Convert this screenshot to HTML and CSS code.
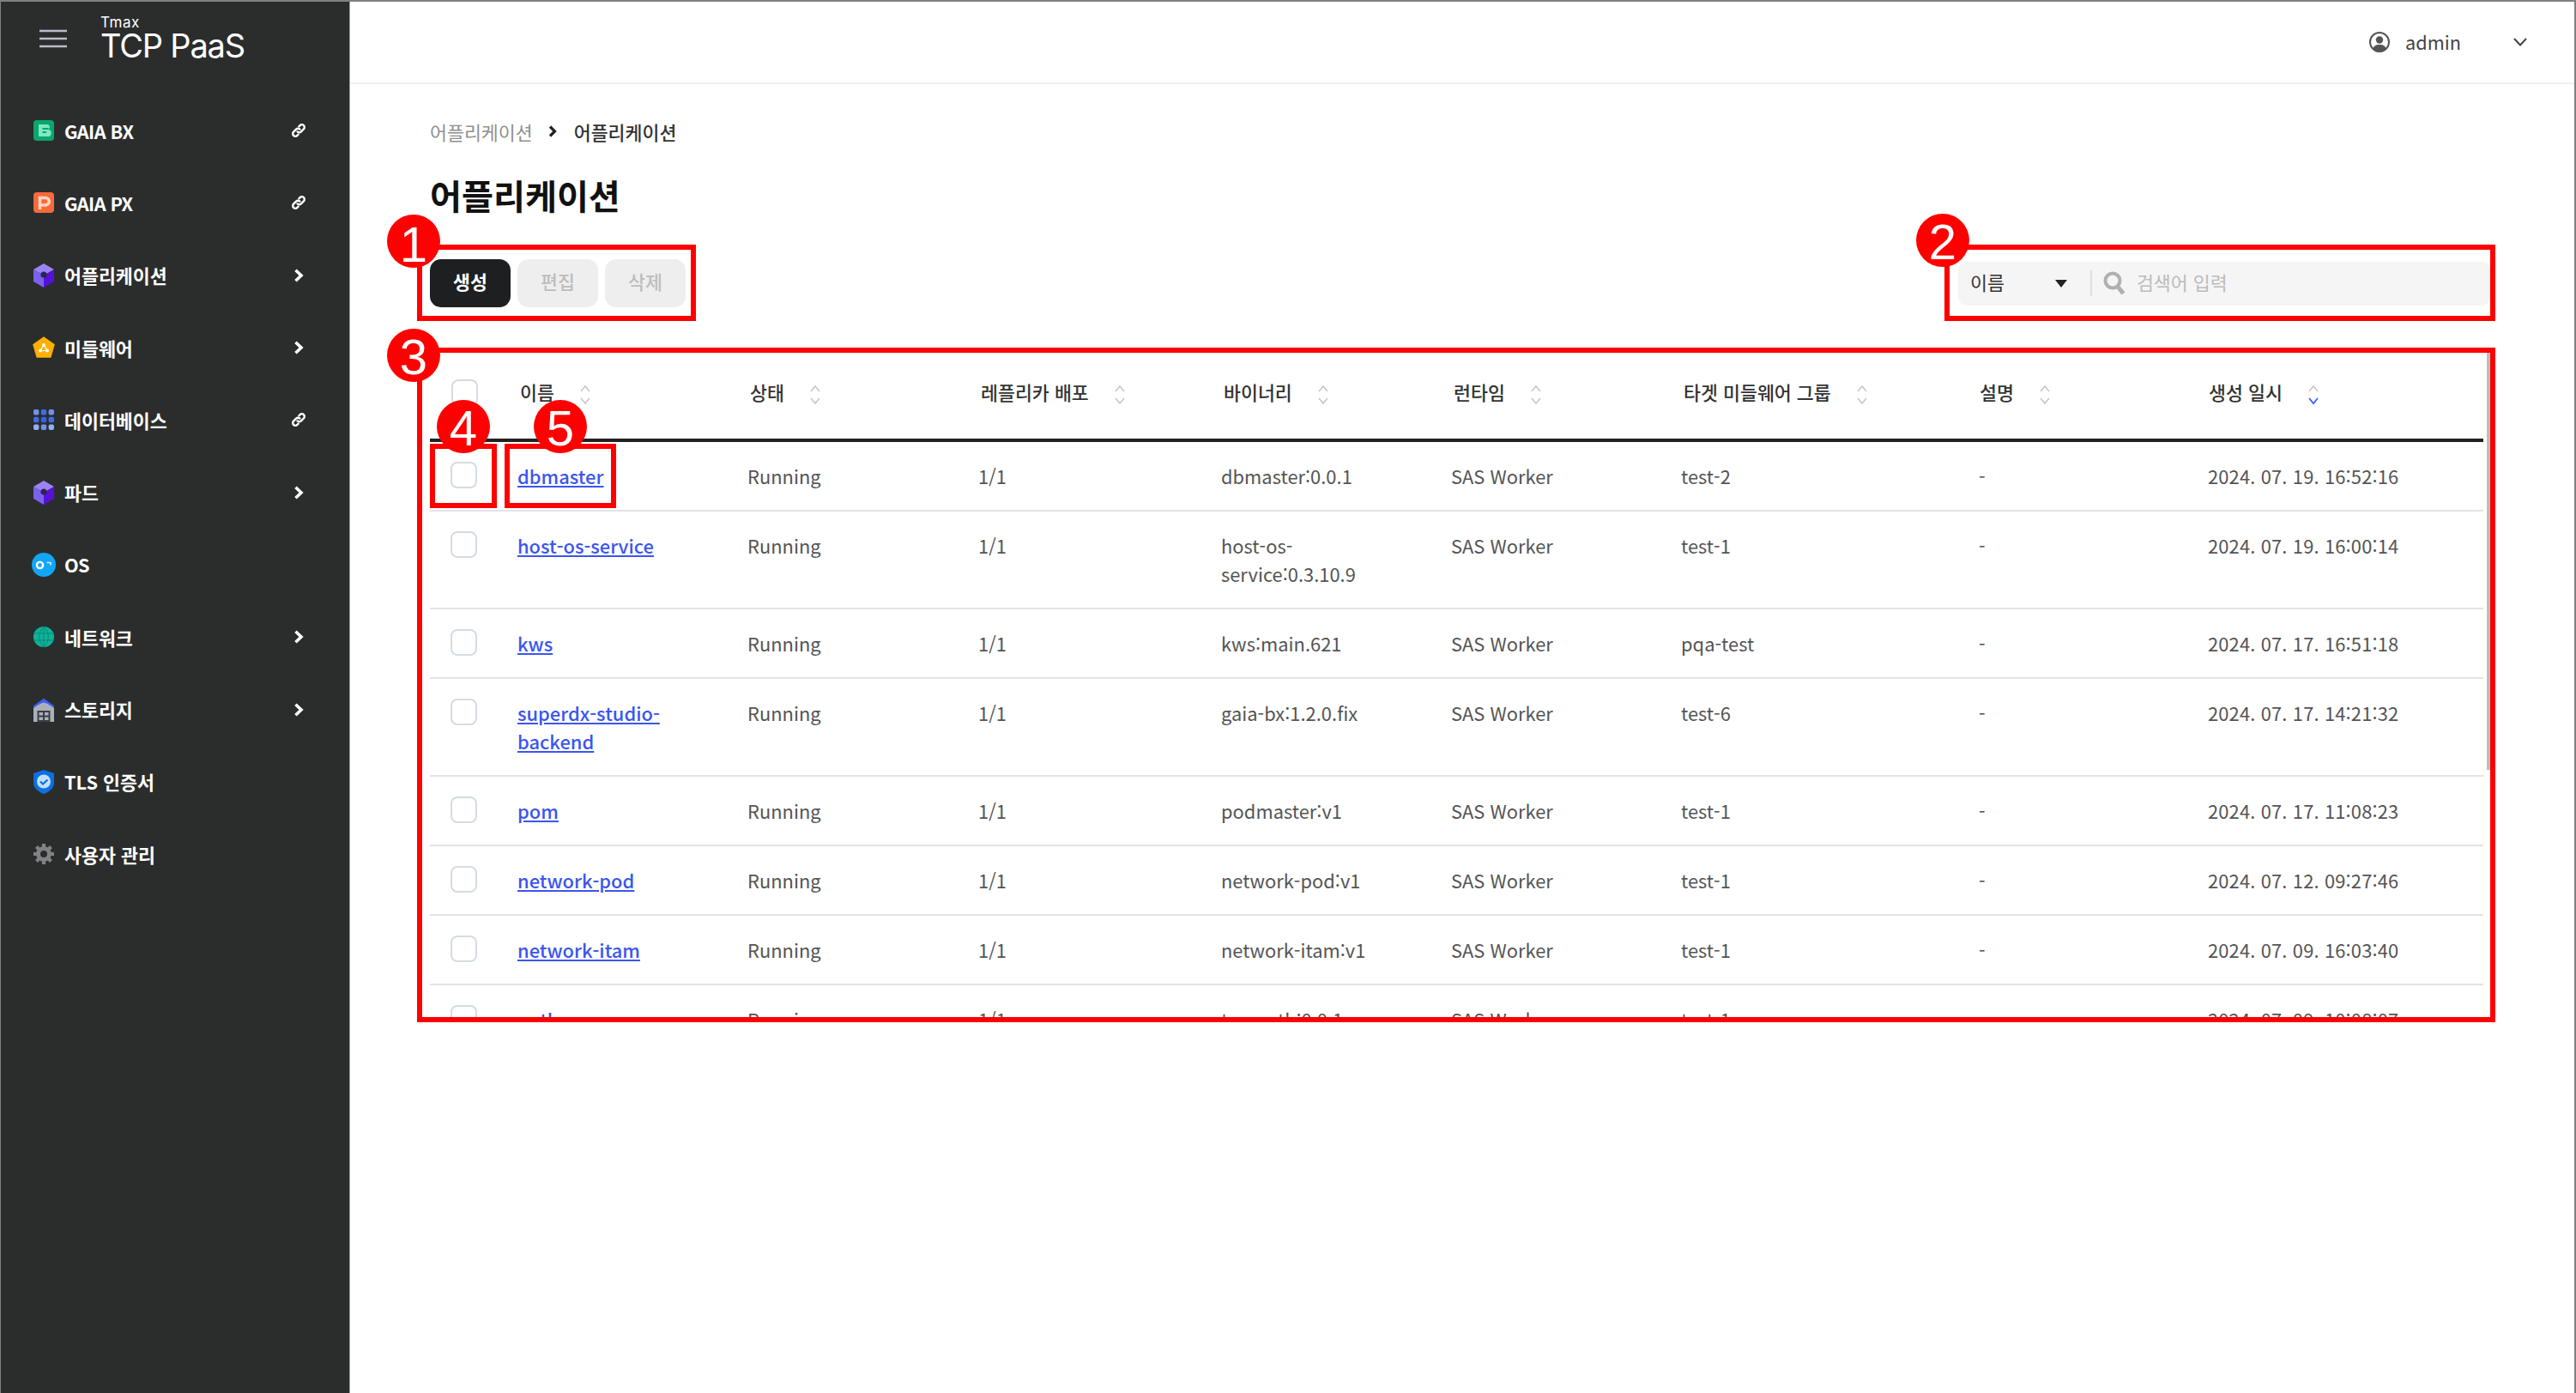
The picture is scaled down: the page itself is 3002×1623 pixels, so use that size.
FILE: index.html
```html
<!DOCTYPE html>
<html lang="ko">
<head>
  <meta charset="UTF-8" />
  <title>TCP PaaS - 어플리케이션</title>
  <link rel="stylesheet" href="styles.css">
</head>
<body>

<svg class="defs" width="0" height="0">
  <symbol id="link" viewBox="0 0 18 18">
    <path d="M7.6 10.4a3 3 0 0 0 4.3 0l3-3a3 3 0 0 0-4.3-4.3L9.4 4.3" fill="none" stroke="#fff" stroke-width="2.4" stroke-linecap="round"/>
    <path d="M10.4 7.6a3 3 0 0 0-4.3 0l-3 3a3 3 0 0 0 4.3 4.3l1.2-1.2" fill="none" stroke="#fff" stroke-width="2.4" stroke-linecap="round"/>
  </symbol>
  <symbol id="chevron" viewBox="0 0 12 16">
    <path d="M2.500 1.800l6.500 6.200-6.500 6.200" fill="none" stroke="#fff" stroke-width="3.600"/>
  </symbol>
  <symbol id="cube" viewBox="0 0 24 28">
    <path d="M12 0l12 7-12 7L0 7z" fill="#9a84f4"/>
    <path d="M0 7l12 7v14L0 21z" fill="#7a62ee"/>
    <path d="M24 7l-12 7v14l12-7z" fill="#5710d6"/>
    <circle cx="12" cy="13" r="3.6" fill="#2c2550"/>
  </symbol>
  <symbol id="sort" viewBox="0 0 12 26">
    <path d="M1 9l5-6 5 6M1 17l5 6 5-6" fill="none" stroke="#c4c6ca" stroke-width="1.5"/>
  </symbol>
  <symbol id="sort-desc" viewBox="0 0 12 26">
    <path d="M1 9l5-6 5 6" fill="none" stroke="#c4c6ca" stroke-width="1.5"/>
    <path d="M1 17l5 6 5-6" fill="none" stroke="#3d5ef5" stroke-width="1.8"/>
  </symbol>
</svg>

<div class="app">

  <aside class="sidebar">
    <div class="brand">
      <svg class="menu-icon" width="32" height="22" viewBox="0 0 32 22">
        <path d="M0 2h32M0 11h32M0 20h32" stroke="#b9bdc8" stroke-width="2.6"/>
      </svg>
      <div class="logo">
        <span class="logo-small">Tmax</span>
        <span class="logo-big">TCP PaaS</span>
      </div>
    </div>

    <nav class="nav">
      <a class="nav-item">
        <svg class="nav-icon" viewBox="0 0 24 24">
          <rect width="24" height="24" rx="4" fill="#0aa671"/>
          <path d="M6 5h9.500a3.200 3.200 0 0 1 1.800 6A3.500 3.500 0 0 1 16 19H6z" fill="#7fe9c0"/>
          <path d="M10.500 10h7M10.500 14h4.500" stroke="#0aa671" stroke-width="2"/>
        </svg>
        <span class="nav-label latin">GAIA BX</span>
        <svg class="nav-link-icon"><use href="#link"/></svg>
      </a>
      <a class="nav-item">
        <svg class="nav-icon" viewBox="0 0 24 24">
          <rect width="24" height="24" rx="4" fill="#f8693a"/>
          <path d="M7.500 20V6.500h6.500a4 4 0 0 1 0 8.500H9" fill="none" stroke="#ffd3c0" stroke-width="3.600"/>
        </svg>
        <span class="nav-label latin">GAIA PX</span>
        <svg class="nav-link-icon"><use href="#link"/></svg>
      </a>
      <a class="nav-item">
        <svg class="nav-icon tall"><use href="#cube"/></svg>
        <span class="nav-label">어플리케이션</span>
        <svg class="nav-chevron"><use href="#chevron"/></svg>
      </a>
      <a class="nav-item">
        <svg class="nav-icon wide" viewBox="0 0 26 26">
          <path d="M13 1l12 8.600-4.200 14.400H5.200L1 9.600z" fill="#ffb000" stroke="#ffb000" stroke-width="1.500" stroke-linejoin="round"/>
          <path d="M13 10l-4 6.500h8z" fill="none" stroke="#fff" stroke-width="1.200"/>
          <circle cx="13" cy="10" r="2" fill="#fff"/><circle cx="9" cy="16.500" r="2" fill="#fff"/><circle cx="17" cy="16.500" r="2" fill="#fff"/>
        </svg>
        <span class="nav-label">미들웨어</span>
        <svg class="nav-chevron"><use href="#chevron"/></svg>
      </a>
      <a class="nav-item">
        <svg class="nav-icon" viewBox="0 0 24 24">
          <rect x="0" y="0" width="6.400" height="6.400" rx="2" fill="#6f92ef"/><rect x="8.800" y="0" width="6.400" height="6.400" rx="2" fill="#3f6cea"/><rect x="17.600" y="0" width="6.400" height="6.400" rx="2" fill="#6f92ef"/>
          <rect x="0" y="8.800" width="6.400" height="6.400" rx="2" fill="#3f6cea"/><rect x="8.800" y="8.800" width="6.400" height="6.400" rx="2" fill="#3560e6"/><rect x="17.600" y="8.800" width="6.400" height="6.400" rx="2" fill="#3f6cea"/>
          <rect x="0" y="17.600" width="6.400" height="6.400" rx="2" fill="#8fb0f3"/><rect x="8.800" y="17.600" width="6.400" height="6.400" rx="2" fill="#6f92ef"/><rect x="17.600" y="17.600" width="6.400" height="6.400" rx="2" fill="#8fb0f3"/>
        </svg>
        <span class="nav-label">데이터베이스</span>
        <svg class="nav-link-icon"><use href="#link"/></svg>
      </a>
      <a class="nav-item">
        <svg class="nav-icon tall"><use href="#cube"/></svg>
        <span class="nav-label">파드</span>
        <svg class="nav-chevron"><use href="#chevron"/></svg>
      </a>
      <a class="nav-item">
        <svg class="nav-icon os" viewBox="0 0 28 28">
          <circle cx="14" cy="14" r="14" fill="#12a6f6"/>
          <circle cx="9.500" cy="14.500" r="3.600" fill="none" stroke="#fff" stroke-width="2.400"/>
          <path d="M17.500 11.500h4.500v3" fill="none" stroke="#cdeeff" stroke-width="1.600"/>
        </svg>
        <span class="nav-label latin">OS</span>
      </a>
      <a class="nav-item">
        <svg class="nav-icon" viewBox="0 0 24 24">
          <circle cx="12" cy="12" r="12" fill="#0db39a"/>
          <path d="M0 8h24M0 16h24M12 0v24M12 0c-7 6-7 18 0 24M12 0c7 6 7 18 0 24" fill="none" stroke="#078a76" stroke-width="1"/>
        </svg>
        <span class="nav-label">네트워크</span>
        <svg class="nav-chevron"><use href="#chevron"/></svg>
      </a>
      <a class="nav-item">
        <svg class="nav-icon tall" viewBox="0 0 24 28">
          <path d="M0 11L12 3l12 8v17H0z" fill="#aab0b8"/>
          <path d="M0 9.500L12 1l12 8.500V12L12 4 0 12z" fill="#3f5ff5"/>
          <path d="M12 1l12 8.500-12-4-12 4z" fill="#3f5ff5"/>
          <rect x="4.500" y="15" width="15" height="13" fill="#3b3e44"/>
          <path d="M6.500 17h4.500v3.500H6.500zM13 17h4.500v3.500H13zM6.500 22.500h4.500V26H6.500zM13 22.500h4.500V26H13z" fill="#aab0b8"/>
        </svg>
        <span class="nav-label">스토리지</span>
        <svg class="nav-chevron"><use href="#chevron"/></svg>
      </a>
      <a class="nav-item">
        <svg class="nav-icon tall" viewBox="0 0 24 28">
          <path d="M12 0l12 4v11c0 6-5 10.500-12 13C5 25.500 0 21 0 15V4z" fill="#0b70e4"/>
          <circle cx="12" cy="13.500" r="8" fill="#c4dffc"/>
          <path d="M8 13.500l3 3 5.500-5" fill="none" stroke="#0b70e4" stroke-width="2.200"/>
        </svg>
        <span class="nav-label">TLS 인증서</span>
      </a>
      <a class="nav-item">
        <svg class="nav-icon" viewBox="0 0 24 24">
          <circle cx="12" cy="12" r="6.500" fill="none" stroke="#808284" stroke-width="5"/>
          <path d="M12 0v5M12 19v5M0 12h5M19 12h5M3.500 3.500l3.500 3.500M17 17l3.500 3.500M20.500 3.500L17 7M7 17l-3.500 3.500" stroke="#808284" stroke-width="4.200"/>
        </svg>
        <span class="nav-label">사용자 관리</span>
      </a>
    </nav>
  </aside>

  <main class="main">
    <header class="topbar">
      <svg class="user-icon" viewBox="0 0 24 24">
        <circle cx="12" cy="12" r="11" fill="none" stroke="#555" stroke-width="2"/>
        <circle cx="12" cy="9.500" r="4.200" fill="#555"/>
        <path d="M4 20c1.500-4 4.500-5 8-5s6.500 1 8 5c-2 2.500-5 4-8 4s-6-1.500-8-4z" fill="#555"/>
      </svg>
      <span class="user-name">admin</span>
      <svg class="user-caret" viewBox="0 0 16 10">
        <path d="M1 1l7 7.500L15 1" fill="none" stroke="#444" stroke-width="2"/>
      </svg>
    </header>

    <section class="content">
      <div class="breadcrumb">
        <span class="crumb">어플리케이션</span>
        <svg class="crumb-sep" viewBox="0 0 10 14"><path d="M2 1.500L7.500 7 2 12.500" fill="none" stroke="#222" stroke-width="3.200"/></svg>
        <span class="crumb current">어플리케이션</span>
      </div>

      <h1 class="page-title">어플리케이션</h1>

      <div class="toolbar">
        <div class="actions">
          <button class="btn btn-primary">생성</button>
          <button class="btn" disabled>편집</button>
          <button class="btn" disabled>삭제</button>
        </div>
        <div class="search">
          <span class="search-field">이름</span>
          <svg class="search-arrow" viewBox="0 0 14 9"><path d="M0 0h14L7 9z" fill="#222"/></svg>
          <span class="search-divider"></span>
          <svg class="search-icon" viewBox="0 0 26 28">
            <circle cx="11" cy="11" r="8.500" fill="none" stroke="#b0b0b0" stroke-width="4"/>
            <path d="M17 18l6.500 8" stroke="#b0b0b0" stroke-width="5"/>
          </svg>
          <span class="search-placeholder">검색어 입력</span>
        </div>
      </div>

      <div class="table-wrap">
        <table class="app-table">
          <colgroup>
            <col class="col-check"><col class="col-name"><col class="col-status"><col class="col-replica"><col class="col-binary"><col class="col-runtime"><col class="col-target"><col class="col-desc"><col class="col-date">
          </colgroup>
          <thead>
            <tr>
              <th><input type="checkbox" class="check" /></th>
              <th>이름<svg class="sort"><use href="#sort"/></svg></th>
              <th>상태<svg class="sort"><use href="#sort"/></svg></th>
              <th>레플리카 배포<svg class="sort"><use href="#sort"/></svg></th>
              <th>바이너리<svg class="sort"><use href="#sort"/></svg></th>
              <th>런타임<svg class="sort"><use href="#sort"/></svg></th>
              <th>타겟 미들웨어 그룹<svg class="sort"><use href="#sort"/></svg></th>
              <th class="th-tight">설명<svg class="sort"><use href="#sort"/></svg></th>
              <th class="th-tight">생성 일시<svg class="sort"><use href="#sort-desc"/></svg></th>
            </tr>
          </thead>
          <tbody>
            <tr>
              <td><input type="checkbox" class="check" /></td>
              <td><a class="app-link">dbmaster</a></td>
              <td>Running</td><td>1/1</td><td>dbmaster:0.0.1</td><td>SAS Worker</td><td>test-2</td><td>-</td><td>2024. 07. 19. 16:52:16</td>
            </tr>
            <tr>
              <td><input type="checkbox" class="check" /></td>
              <td><a class="app-link">host-os-service</a></td>
              <td>Running</td><td>1/1</td><td>host-os-service:0.3.10.9</td><td>SAS Worker</td><td>test-1</td><td>-</td><td>2024. 07. 19. 16:00:14</td>
            </tr>
            <tr>
              <td><input type="checkbox" class="check" /></td>
              <td><a class="app-link">kws</a></td>
              <td>Running</td><td>1/1</td><td>kws:main.621</td><td>SAS Worker</td><td>pqa-test</td><td>-</td><td>2024. 07. 17. 16:51:18</td>
            </tr>
            <tr>
              <td><input type="checkbox" class="check" /></td>
              <td><a class="app-link">superdx-studio-backend</a></td>
              <td>Running</td><td>1/1</td><td>gaia-bx:1.2.0.fix</td><td>SAS Worker</td><td>test-6</td><td>-</td><td>2024. 07. 17. 14:21:32</td>
            </tr>
            <tr>
              <td><input type="checkbox" class="check" /></td>
              <td><a class="app-link">pom</a></td>
              <td>Running</td><td>1/1</td><td>podmaster:v1</td><td>SAS Worker</td><td>test-1</td><td>-</td><td>2024. 07. 17. 11:08:23</td>
            </tr>
            <tr>
              <td><input type="checkbox" class="check" /></td>
              <td><a class="app-link">network-pod</a></td>
              <td>Running</td><td>1/1</td><td>network-pod:v1</td><td>SAS Worker</td><td>test-1</td><td>-</td><td>2024. 07. 12. 09:27:46</td>
            </tr>
            <tr>
              <td><input type="checkbox" class="check" /></td>
              <td><a class="app-link">network-itam</a></td>
              <td>Running</td><td>1/1</td><td>network-itam:v1</td><td>SAS Worker</td><td>test-1</td><td>-</td><td>2024. 07. 09. 16:03:40</td>
            </tr>
            <tr>
              <td><input type="checkbox" class="check" /></td>
              <td><a class="app-link">auth</a></td>
              <td>Running</td><td>1/1</td><td>tcp-auth:0.0.1</td><td>SAS Worker</td><td>test-1</td><td>-</td><td>2024. 07. 09. 10:08:07</td>
            </tr>
          </tbody>
        </table>
        <div class="scroll-thumb"></div>
      </div>
    </section>
  </main>
</div>

<!-- red annotations on top of the screenshot -->
<div class="mark-box box-1"></div>
<div class="mark-box box-2"></div>
<div class="mark-box box-3"></div>
<div class="mark-box box-4"></div>
<div class="mark-box box-5"></div>
<div class="mark-num num-1">1</div>
<div class="mark-num num-2">2</div>
<div class="mark-num num-3">3</div>
<div class="mark-num num-4">4</div>
<div class="mark-num num-5">5</div>

</body>
</html>
```

FILE: styles.css
```css
* {
  box-sizing: border-box;
}
html, body {
  margin: 0;
  padding: 0;
  height: 100%;
}
body {
  font-family: "Noto Sans CJK KR", "Noto Sans", sans-serif;
  font-size: 21.7px;
  background: #fff;
  color: #555;
  position: relative;
  overflow: hidden;
}
.defs {
  position: absolute;
}
.app {
  display: flex;
  height: 100%;
  border-top: 2px solid #808080;
  border-left: 1px solid #808080;
  border-right: 2px solid #808080;
}

/* sidebar */
.sidebar {
  width: 407px;
  flex-shrink: 0;
  background: #2b2d2d;
  color: #fff;
  border-right: 1px solid #9a9a9a;
}
.brand {
  height: 108px;
  display: flex;
  align-items: flex-start;
  padding: 32px 0 0 45px;
}
.menu-icon {
  display: block;
}
.logo {
  margin-left: 39px;
  margin-top: -14px;
  display: flex;
  flex-direction: column;
  font-family: "Inter", sans-serif;
}
.logo-small {
  font-size: 17px;
  line-height: 12px;
  letter-spacing: 0.5px;
}
.logo-big {
  font-size: 38px;
  line-height: 42px;
  letter-spacing: -1.2px;
  white-space: nowrap;
}
.nav-item {
  display: flex;
  align-items: center;
  height: 84.3px;
  padding: 0 50px 0 38px;
  font-weight: 700;
  color: #fff;
}
.nav-icon {
  width: 24px;
  height: 24px;
  flex-shrink: 0;
}
.nav-icon.tall {
  height: 28px;
}
.nav-icon.wide {
  width: 26px;
  height: 26px;
  margin: 0 -1px;
}
.nav-icon.os {
  width: 28px;
  height: 28px;
  margin: 0 -2px;
}
.nav-label {
  margin-left: 12px;
  flex: 1;
  white-space: nowrap;
}
.nav-label.latin {
  letter-spacing: -0.6px;
}
.nav-link-icon {
  width: 18px;
  height: 18px;
}
.nav-chevron {
  width: 12px;
  height: 16px;
  margin-right: 3px;
}

/* main area */
.main {
  flex: 1;
  min-width: 0;
}
.topbar {
  height: 96px;
  border-bottom: 2px solid #f0f0f4;
  display: flex;
  align-items: center;
  justify-content: flex-end;
  padding-right: 55px;
}
.user-icon {
  width: 24px;
  height: 24px;
}
.user-name {
  margin-left: 18px;
  color: #444;
  line-height: 30px;
}
.user-caret {
  width: 16px;
  height: 10px;
  margin-left: 61px;
}
.content {
  padding: 40px 98px 0 93px;
}
.breadcrumb {
  display: flex;
  align-items: center;
  height: 30px;
  color: #8f8f8f;
}
.crumb.current {
  color: #333;
  font-weight: 500;
}
.crumb-sep {
  width: 10px;
  height: 14px;
  margin: 0 20px 0 18px;
}
.page-title {
  margin: 31px 0 0;
  font-size: 40.2px;
  line-height: 56px;
  font-weight: 700;
  color: #111;
}
.toolbar {
  margin-top: 47px;
  display: flex;
  justify-content: space-between;
  align-items: center;
}
.actions {
  display: flex;
  gap: 8px;
}
.btn {
  width: 94px;
  height: 56px;
  border: none;
  border-radius: 13px;
  background: #eee;
  color: #bdbdbd;
  font-family: inherit;
  font-size: 21.7px;
  font-weight: 500;
  line-height: 52px;
  padding: 0 0 4px;
}
.btn-primary {
  background: #1e1f21;
  color: #fff;
  font-weight: 700;
}
.search {
  width: 620px;
  height: 51px;
  background: #f5f5f5;
  border-radius: 10px;
  display: flex;
  align-items: center;
  padding-left: 14px;
}
.search-field {
  color: #333;
  margin-top: -3px;
}
.search-arrow {
  width: 14px;
  height: 9px;
  margin-left: 59px;
}
.search-divider {
  width: 2px;
  height: 30px;
  background: #e0e0e0;
  margin-left: 27px;
}
.search-icon {
  width: 26px;
  height: 28px;
  margin-left: 13px;
}
.search-placeholder {
  margin-left: 13px;
  color: #bbb;
  margin-top: -3px;
}

/* table */
.table-wrap {
  margin-top: 53px;
  height: 774px;
  overflow: hidden;
  position: relative;
}
.app-table {
  width: 2393px;
  table-layout: fixed;
  border-collapse: separate;
  border-spacing: 0;
}
.col-check { width: 102px; }
.col-name { width: 268px; }
.col-status { width: 269px; }
.col-replica { width: 283px; }
.col-binary { width: 268px; }
.col-runtime { width: 268px; }
.col-target { width: 347px; }
.col-desc { width: 267px; }
.col-date { width: 321px; }
.app-table th {
  padding: 29px 0 38px 3px;
  border-bottom: 4px solid #222;
  text-align: left;
  vertical-align: top;
  font-weight: 500;
  color: #333;
  line-height: 33px;
  white-space: nowrap;
}
.app-table th.th-tight {
  padding-left: 1px;
}
.app-table td {
  padding: 23px 40px 23px 0;
  border-bottom: 2px solid #e3e4e6;
  font-size: 21.9px;
  line-height: 33px;
  vertical-align: top;
}
.app-table td:last-child {
  padding-right: 0;
  letter-spacing: 0.15px;
}
.app-table th:first-child {
  padding: 31px 0 36px 25px;
}
.app-table td:first-child {
  padding-left: 24px;
}
.check {
  appearance: none;
  display: block;
  width: 31px;
  height: 31px;
  margin: 0;
  border: 2px solid #d5dbe4;
  border-radius: 8px;
  background: #fff;
}
.app-link {
  color: #3b55f0;
  text-decoration: underline;
  font-weight: 500;
}
.sort {
  width: 12px;
  height: 26px;
  margin-left: 30px;
  vertical-align: middle;
}
.scroll-thumb {
  position: absolute;
  top: 0;
  right: 0;
  width: 4px;
  height: 486px;
  background: #bdbdbd;
}

/* annotations */
.mark-box {
  position: absolute;
  border: 6px solid #f00;
}
.box-1 { left: 486px; top: 285px; width: 325px; height: 89px; }
.box-2 { left: 2266px; top: 285px; width: 642px; height: 89px; }
.box-3 { left: 486px; top: 405px; width: 2422px; height: 786px; }
.box-4 { left: 501px; top: 517px; width: 78px; height: 75px; }
.box-5 { left: 588px; top: 517px; width: 130px; height: 75px; }
.mark-num {
  position: absolute;
  width: 62px;
  height: 62px;
  border-radius: 50%;
  background: #f00;
  color: #fff;
  font-family: "Liberation Sans", sans-serif;
  font-size: 58px;
  line-height: 65px;
  text-align: center;
}
.num-1 { left: 451px; top: 250px; line-height: 69px; }
.num-2 { left: 2233px; top: 249px; }
.num-3 { left: 451px; top: 383px; }
.num-4 { left: 509px; top: 466px; }
.num-5 { left: 622px; top: 466px; }
```
